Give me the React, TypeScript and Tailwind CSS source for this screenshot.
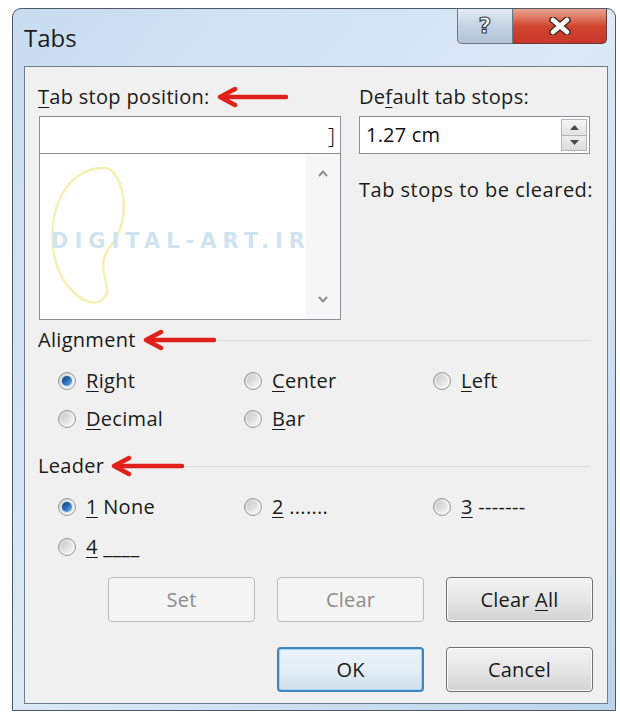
import React from 'react';

const font = { fontFamily: '"Open Sans", "Noto Sans", sans-serif' };

// access-key letter, underlined like a native dialog
const Key: React.FC<{ children: React.ReactNode }> = ({ children }) => (
  <span className="underline underline-offset-[3px] decoration-1">{children}</span>
);

const RedArrow: React.FC<{ width?: number }> = ({ width = 72 }) => (
  <svg width={width} height="22" viewBox={`0 0 ${width} 22`} className="shrink-0">
    <line x1="6" y1="11" x2={width - 2} y2="11" stroke="#e0201a" strokeWidth="4.5" strokeLinecap="round" />
    <path d="M19 3 L4 11 L19 19" fill="none" stroke="#e0201a" strokeWidth="4.5" strokeLinecap="round" strokeLinejoin="round" />
  </svg>
);

const Radio: React.FC<{ checked?: boolean; children: React.ReactNode }> = ({ checked, children }) => (
  <div className="flex items-center gap-[10px]">
    <span className="w-[18px] h-[18px] rounded-full border border-[#9a9a9a] bg-gradient-to-br from-[#d2d2d2] via-[#f4f4f4] to-[#ffffff] flex items-center justify-center shadow-[inset_0_0_2px_rgba(0,0,0,0.15)]">
      {checked ? (
        <span className="w-[10px] h-[10px] rounded-full bg-gradient-to-br from-[#0f3c72] via-[#2a6fb5] to-[#7fb8e6] shadow-[0_0_2px_#6aa3d8]" />
      ) : (
        <span className="w-[12px] h-[12px] rounded-full bg-gradient-to-br from-[#c9c9c9] to-[#f6f6f6]" />
      )}
    </span>
    <span className="text-[20px] tracking-[0.3px] text-[#1a1a1a] leading-none">{children}</span>
  </div>
);

const SectionHeader: React.FC<{ label: string; arrowWidth: number }> = ({ label, arrowWidth }) => (
  <div className="flex items-center h-[24px]">
    <span className="text-[20px] tracking-[0.3px] text-[#1a1a1a] leading-none pr-[6px]">{label}</span>
    <RedArrow width={arrowWidth} />
    <div className="flex-1 h-px bg-[#dcdcdc] mr-[4px]" />
  </div>
);

const Button: React.FC<{
  children: React.ReactNode;
  disabled?: boolean;
  primary?: boolean;
}> = ({ children, disabled, primary }) => {
  const base =
    'w-[147px] h-[45px] rounded-[4px] text-[20px] tracking-[0.2px] flex items-center justify-center leading-none';
  if (disabled)
    return (
      <div className={`${base} border border-[#b8bcbf] bg-[#f4f4f4] text-[#8c8c8c]`}>{children}</div>
    );
  if (primary)
    return (
      <div
        className={`${base} border-2 border-[#3d86c0] bg-gradient-to-b from-[#eaf3fb] via-[#e4eef7] to-[#cfdfec] text-[#1a1a1a] shadow-[inset_0_0_0_1px_#a9d2f0]`}
      >
        {children}
      </div>
    );
  return (
    <div
      className={`${base} border border-[#707070] bg-gradient-to-b from-[#f3f3f3] via-[#e6e6e6] to-[#d2d2d2] text-[#1a1a1a] shadow-[inset_0_0_0_1px_#fbfbfb]`}
    >
      {children}
    </div>
  );
};

const TitleButtons: React.FC = () => (
  <div className="flex h-[35px] self-start">
    <div className="w-[56px] h-full rounded-bl-[5px] border border-t-0 border-[#6b7785] bg-gradient-to-b from-[#e4ecf4] via-[#c4d2e0] to-[#b3c3d4] flex items-center justify-center">
      <span
        className="text-[22px] font-bold text-white leading-none [-webkit-text-stroke:1.2px_#38414b]"
        style={{ fontFamily: '"DejaVu Sans", sans-serif' }}
      >
        ?
      </span>
    </div>
    <div className="w-[94px] h-full rounded-br-[5px] border border-t-0 border-l-0 border-[#6b3a36] bg-gradient-to-b from-[#e8a293] via-[#d1462f] to-[#c8352a] flex items-center justify-center">
      <svg width="24" height="18" viewBox="0 0 24 18">
        <path d="M5 3 L19 15 M19 3 L5 15" stroke="#4a2a26" strokeWidth="7.5" strokeLinecap="round" />
        <path d="M5 3 L19 15 M19 3 L5 15" stroke="#ffffff" strokeWidth="4.5" strokeLinecap="round" />
      </svg>
    </div>
  </div>
);

const App: React.FC = () => {
  return (
    <div className="w-[620px] h-[713px] bg-white pt-[8px] pl-[12px]" style={font}>
      <div className="w-[604px] h-[703px] rounded-t-[9px] border border-[#4d5a66] bg-gradient-to-br from-[#c8dcf0] via-[#dce9f6] to-[#bcd4ec] flex flex-col overflow-hidden">
        {/* title bar */}
        <div className="h-[57px] flex items-start justify-between pr-[8px]">
          <span className="pl-[11px] pt-[17px] text-[24px] text-[#1c1c1c] leading-none">Tabs</span>
          <TitleButtons />
        </div>

        {/* client area */}
        <div className="ml-[11px] mr-[7px] h-[638px] border border-[#6f7e8c] bg-[#f0f0f0] pl-[13px] pr-[12px] pt-[18px] flex flex-col">
          {/* top columns */}
          <div className="flex gap-[18px]">
            <div className="w-[303px] flex flex-col">
              <div className="flex items-center h-[24px]">
                <span className="text-[20px] tracking-[0.3px] text-[#1a1a1a] leading-none pr-[6px]">
                  <Key>T</Key>ab stop position:
                </span>
                <RedArrow width={72} />
              </div>
              <div className="mt-[7px] ml-px h-[38px] border border-[#8d9196] bg-white flex items-center justify-end pr-[5px]">
                <span className="text-[22px] leading-none text-[#111] font-light">]</span>
              </div>
              <div className="ml-px h-[166px] border border-t-0 border-[#8d9196] bg-white flex relative overflow-hidden">
                <div className="flex-1 relative">
                  <svg className="absolute left-[4px] top-[8px]" width="120" height="156" viewBox="0 0 120 156">
                    <path
                      d="M62 6 C22 4 2 50 10 92 C16 126 44 148 58 138 C74 126 46 108 68 82 C88 58 80 10 62 6 Z"
                      fill="none"
                      stroke="#f4efb4"
                      strokeWidth="2.5"
                    />
                  </svg>
                  <span
                    className="absolute left-[11px] top-[77px] text-[21px] font-bold tracking-[6px] text-[#cfe3f1] leading-none whitespace-nowrap"
                    style={{ fontFamily: '"DejaVu Sans", sans-serif' }}
                  >
                    DIGITAL-ART.IR
                  </span>
                </div>
                <div className="w-[34px] bg-[#f6f6f6] flex flex-col items-center justify-between py-[16px] relative">
                  <svg width="10" height="7" viewBox="0 0 10 7">
                    <path d="M1 6 L5 1.5 L9 6" fill="none" stroke="#8e8e8e" strokeWidth="2" />
                  </svg>
                  <svg width="10" height="7" viewBox="0 0 10 7">
                    <path d="M1 1 L5 5.5 L9 1" fill="none" stroke="#8e8e8e" strokeWidth="2" />
                  </svg>
                </div>
              </div>
            </div>

            <div className="flex-1 flex flex-col">
              <div className="flex items-center h-[24px]">
                <span className="text-[20px] tracking-[0.3px] text-[#1a1a1a] leading-none">
                  De<Key>f</Key>ault tab stops:
                </span>
              </div>
              <div className="mt-[7px] w-[231px] h-[38px] border border-[#8d9196] bg-white flex items-center">
                <span className="flex-1 pl-[6px] text-[20px] tracking-[0.2px] text-[#111] leading-none">1.27 cm</span>
                <div className="w-[26px] h-[32px] mr-[2px] border border-[#b5b5b5] flex flex-col">
                  <div className="flex-1 bg-gradient-to-b from-[#f6f6f6] to-[#e2e2e2] border-b border-[#b5b5b5] flex items-center justify-center">
                    <svg width="9" height="5" viewBox="0 0 9 5">
                      <path d="M0 5 L4.5 0 L9 5 Z" fill="#4a4a4a" />
                    </svg>
                  </div>
                  <div className="flex-1 bg-gradient-to-b from-[#ececec] to-[#dcdcdc] flex items-center justify-center">
                    <svg width="9" height="5" viewBox="0 0 9 5">
                      <path d="M0 0 L4.5 5 L9 0 Z" fill="#4a4a4a" />
                    </svg>
                  </div>
                </div>
              </div>
              <div className="mt-[26px] text-[20px] tracking-[0.5px] text-[#1a1a1a] leading-none">
                Tab stops to be cleared:
              </div>
            </div>
          </div>

          {/* alignment */}
          <div className="mt-[8px]">
            <SectionHeader label="Alignment" arrowWidth={74} />
            <div className="grid grid-cols-[186px_189px_1fr] gap-y-[18px] pl-[20px] mt-[19px]">
              <Radio checked>
                <Key>R</Key>ight
              </Radio>
              <Radio>
                <Key>C</Key>enter
              </Radio>
              <Radio>
                <Key>L</Key>eft
              </Radio>
              <Radio>
                <Key>D</Key>ecimal
              </Radio>
              <Radio>
                <Key>B</Key>ar
              </Radio>
            </div>
          </div>

          {/* leader */}
          <div className="mt-[25px]">
            <SectionHeader label="Leader" arrowWidth={74} />
            <div className="grid grid-cols-[186px_189px_1fr] gap-y-[20px] pl-[20px] mt-[19px]">
              <Radio checked>
                <Key>1</Key> None
              </Radio>
              <Radio>
                <Key>2</Key> .......
              </Radio>
              <Radio>
                <Key>3</Key> -------
              </Radio>
              <Radio>
                <Key>4</Key> ____
              </Radio>
            </div>
          </div>

          {/* buttons */}
          <div className="mt-[20px] flex flex-col items-end gap-[25px] pr-[2px]">
            <div className="flex gap-[22px]">
              <Button disabled>Set</Button>
              <Button disabled>Clear</Button>
              <Button>
                Clear&nbsp;<Key>A</Key>ll
              </Button>
            </div>
            <div className="flex gap-[22px]">
              <Button primary>OK</Button>
              <Button>Cancel</Button>
            </div>
          </div>
        </div>
      </div>
    </div>
  );
};

export default App;
